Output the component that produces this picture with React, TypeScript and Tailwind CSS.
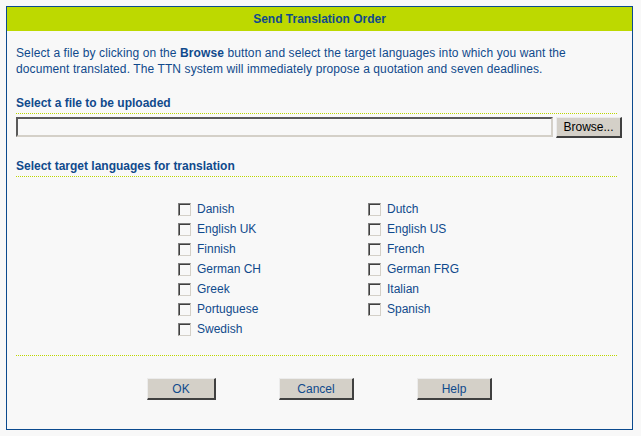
import React from "react";

const left = ["Danish", "English UK", "Finnish", "German CH", "Greek", "Portuguese", "Swedish"];
const right = ["Dutch", "English US", "French", "German FRG", "Italian", "Spanish"];

function Check({ label }: { label: string }) {
  return (
    <label className="flex items-center h-[20px]">
      <span className="w-[13px] h-[13px] border border-t-[#808080] border-l-[#808080] border-b-[#d4d0c8] border-r-[#d4d0c8] shadow-[inset_1px_1px_0_#404040] bg-[#f8f8f8]" />
      <span className="ml-[6px]">{label}</span>
    </label>
  );
}

function Btn({ label, w }: { label: string; w: string }) {
  return (
    <button
      className={`${w} h-[22px] bg-[#d4d0c8] border-t border-l border-t-[#ececec] border-l-[#ececec] border-b-2 border-r-2 border-b-[#404040] border-r-[#404040] text-[#104a8c] text-[12px] leading-none`}
    >
      {label}
    </button>
  );
}

export default function App() {
  return (
    <div
      className="w-[641px] h-[436px] bg-[#f8f8f8] p-[6px] text-[#104a8c] text-[12px]"
      style={{ fontFamily: '"Liberation Sans", Arial, sans-serif' }}
    >
      <div className="w-[627px] h-[424px] border border-[#0b4a8e] flex flex-col">
        <div className="h-[24px] bg-[#bdd900] flex items-center justify-center font-bold text-[12px]">
          Send Translation Order
        </div>
        <div className="px-[9px] flex flex-col">
          <p className="mt-[14px] leading-[16px] tracking-[0.1px] whitespace-nowrap">
            Select a file by clicking on the <b>Browse</b> button and select the target languages into which you want the
            <br />
            document translated. The TTN system will immediately propose a quotation and seven deadlines.
          </p>
          <div className="mt-[18px] font-bold leading-[16px] pb-[2px] border-b border-dotted border-[#bcd600] w-[601px]">
            Select a file to be uploaded
          </div>
          <div className="mt-[3px] flex">
            <div className="w-[537px] h-[20px] border-2 border-t-[#5a5a5a] border-l-[#5a5a5a] border-b-[#d4d0c8] border-r-[#d4d0c8] bg-[#f8f8f8]" />
            <button className="ml-[3px] w-[66px] h-[21px] bg-[#d4d0c8] border-t border-l border-t-[#ececec] border-l-[#ececec] border-b-2 border-r-2 border-b-[#404040] border-r-[#404040] text-black text-[12px] leading-none">
              Browse...
            </button>
          </div>
          <div className="mt-[20px] font-bold leading-[16px] pb-[2px] border-b border-dotted border-[#bcd600] w-[601px]">
            Select target languages for translation
          </div>
          <div className="mt-[22px] pl-[162px] grid grid-cols-[190px_190px]">
            <div className="flex flex-col">
              {left.map((l) => (
                <Check key={l} label={l} />
              ))}
            </div>
            <div className="flex flex-col">
              {right.map((l) => (
                <Check key={l} label={l} />
              ))}
            </div>
          </div>
          <div className="mt-[16px] border-t border-dotted border-[#bcd600] w-[601px]" />
          <div className="mt-[22px] flex justify-center gap-[63px]">
            <Btn label="OK" w="w-[69px]" />
            <Btn label="Cancel" w="w-[75px]" />
            <Btn label="Help" w="w-[75px]" />
          </div>
        </div>
      </div>
    </div>
  );
}
